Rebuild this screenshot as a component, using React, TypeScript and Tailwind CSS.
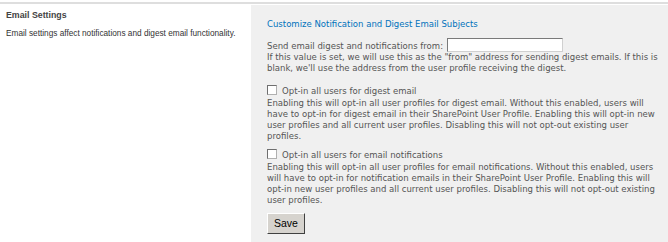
import React from "react";

function Check() {
  return (
    <span className="inline-block w-[10px] h-[10px] border border-t-[#6f6f6f] border-l-[#6f6f6f] border-r-[#b0b0b0] border-b-[#b0b0b0] bg-white mr-[5px] align-[-1px]" />
  );
}

export default function App() {
  return (
    <div className="w-[668px] h-[242px] bg-white overflow-hidden font-['DejaVu_Sans',sans-serif]">
      <div className="h-[2px]" />
      <div className="h-[2px] bg-[#dedede]" />
      <div className="flex h-[238px]">
        <div className="w-[251px] shrink-0 pt-[5px] pl-[6px] font-['Liberation_Sans',sans-serif] text-[#333] text-[8.25px]">
          <div className="font-bold text-[#444] text-[8.8px] leading-[12px]">Email Settings</div>
          <div className="mt-[7px] leading-[12px]">Email settings affect notifications and digest email functionality.</div>
        </div>
        <div className="flex-1 mt-[1px] bg-[#f0f0f0] pl-[16px] pr-[5px] pt-[12px] text-[8.54px] leading-[11px] text-[#555]">
          <div className="text-[#0072bc] leading-[14px]">Customize Notification and Digest Email Subjects</div>
          <div className="mt-[7px] flex items-end">
            <span>Send email digest and notifications from:</span>
            <span className="ml-[4px] w-[116px] h-[14px] bg-white border border-t-[#7a7a7a] border-l-[#7a7a7a] border-r-[#d0d0d0] border-b-[#d0d0d0]" />
          </div>
          <div>If this value is set, we will use this as the "from" address for sending digest emails. If this is blank, we'll use the address from the user profile receiving the digest.</div>
          <div className="mt-[11px] h-[13px] leading-[13px]"><Check />Opt-in all users for digest email</div>
          <div>Enabling this will opt-in all user profiles for digest email. Without this enabled, users will have to opt-in for digest email in their SharePoint User Profile. Enabling this will opt-in new user profiles and all current user profiles. Disabling this will not opt-out existing user profiles.</div>
          <div className="mt-[7px] h-[13px] leading-[13px]"><Check />Opt-in all users for email notifications</div>
          <div>Enabling this will opt-in all user profiles for email notifications. Without this enabled, users will have to opt-in for notification emails in their SharePoint User Profile. Enabling this will opt-in new user profiles and all current user profiles. Disabling this will not opt-out existing user profiles.</div>
          <button className="mt-[7px] w-[38px] h-[21px] bg-[#d6d3ce] border border-t-[#fff] border-l-[#fff] border-r-[#404040] border-b-[#404040] font-['Liberation_Sans',sans-serif] text-[10.5px] text-black">Save</button>
        </div>
      </div>
    </div>
  );
}
